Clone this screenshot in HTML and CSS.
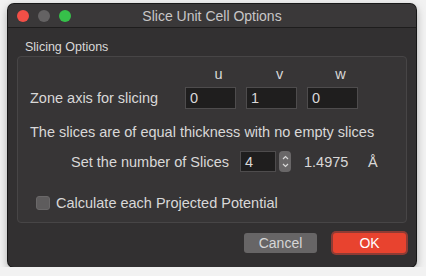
FILE: index.html
```html
<!doctype html>
<html>
    <head>
        <link rel="stylesheet" href="styles.css">
    </head>
    <body>
        <div class="window">
            <div class="titlebar">
                <div class="lights">
                    <span class="light red"></span>
                    <span class="light grey"></span>
                    <span class="light green"></span>
                </div>
                <div class="title">Slice Unit Cell Options</div>
            </div>
            <div class="content">
                <div class="group-title">Slicing Options</div>
                <div class="group">
                    <div class="axis-head">
                        <span class="axis-label">u</span>
                        <span class="axis-label">v</span>
                        <span class="axis-label">w</span>
                    </div>
                    <div class="axis-row">
                        <span class="row-label">Zone axis for slicing</span>
                        <div class="field">0</div>
                        <div class="field">1</div>
                        <div class="field">0</div>
                    </div>
                    <p class="note">The slices are of equal thickness with no empty slices</p>
                    <div class="slices-row">
                        <span class="slices-label">Set the number of Slices</span>
                        <div class="field small">4</div>
                        <div class="stepper">
                            <svg width="7" height="17" viewBox="0 0 7 17">
                                <path d="M1 6 L3.5 3.5 L6 6" fill="none" stroke="#d8d8d8" stroke-width="1.2"/>
                                <path d="M1 11 L3.5 13.5 L6 11" fill="none" stroke="#d8d8d8" stroke-width="1.2"/>
                            </svg>
                        </div>
                        <span class="thickness">1.4975</span>
                        <span class="unit">Å</span>
                    </div>
                    <label class="check-row">
                        <span class="checkbox"></span>
                        <span>Calculate each Projected Potential</span>
                    </label>
                </div>
                <div class="buttons">
                    <button class="btn cancel">Cancel</button>
                    <button class="btn ok">OK</button>
                </div>
            </div>
        </div>
    </body>
</html>
```

FILE: styles.css
```css
* {
    margin: 0;
    padding: 0;
    box-sizing: border-box;
}
body {
    background: rgb(242, 242, 242);
    font-family: "Liberation Sans", Arial, sans-serif;
    color: #d9d8d8;
    padding: 4px 10px 0 8px;
}
.window {
    width: 408px;
    height: 263px;
    background: #323031;
    border-radius: 6px;
    box-shadow: 0 3px 10px rgba(0, 0, 0, 0.35), 0 0 0 1px #1c1c1c;
    overflow: hidden;
}
.titlebar {
    height: 24px;
    background: #3a3839;
    border-bottom: 1px solid #1e1d1d;
    display: flex;
    align-items: center;
    position: relative;
}
.lights {
    display: flex;
    gap: 9px;
    padding-left: 9px;
}
.light {
    width: 12px;
    height: 12px;
    border-radius: 50%;
}
.red {
    background: #f24f47;
}
.grey {
    background: #646263;
}
.green {
    background: #36c04a;
}
.title {
    position: absolute;
    left: 0;
    right: 0;
    text-align: center;
    font-size: 14px;
    color: #c8c6c7;
}
.content {
    padding: 12px 9px 0 9px;
}
.group-title {
    font-size: 12.5px;
    line-height: 15px;
    padding-left: 8px;
    height: 16px;
}
.group {
    height: 167px;
    background: #373536;
    border: 1px solid #474546;
    border-radius: 4px;
    font-size: 14.5px;
    padding-left: 12px;
}
.axis-head {
    display: flex;
    gap: 10px;
    padding-left: 166px;
    padding-top: 9px;
    height: 30px;
}
.axis-label {
    width: 51px;
    text-align: center;
    padding-right: 6px;
}
.axis-row {
    display: flex;
    align-items: center;
    gap: 10px;
}
.row-label {
    width: 145px;
}
.field {
    width: 51px;
    height: 22px;
    background: #1f1e1e;
    border: 1px solid #4e4c4d;
    padding-left: 4px;
    line-height: 20px;
    font-size: 14.5px;
}
.note {
    margin-top: 15px;
    line-height: 17px;
}
.slices-row {
    display: flex;
    align-items: center;
    margin-top: 10px;
    padding-left: 41px;
}
.slices-label {
    width: 169px;
}
.field.small {
    width: 36px;
    height: 21px;
}
.stepper {
    width: 12px;
    height: 21px;
    margin-left: 3px;
    background: #696768;
    border-radius: 4px;
    display: flex;
    align-items: center;
    justify-content: center;
}
.thickness {
    margin-left: 13px;
    width: 64px;
}
.check-row {
    display: flex;
    align-items: center;
    gap: 6px;
    margin-top: 23px;
    padding-left: 6px;
}
.checkbox {
    width: 14px;
    height: 14px;
    border-radius: 3px;
    background: #5e5c5d;
    border: 1px solid #6a6869;
}
.buttons {
    display: flex;
    justify-content: flex-end;
    gap: 16px;
    margin-top: 10px;
    padding-right: 1px;
}
.btn {
    width: 73px;
    height: 20px;
    border: none;
    border-radius: 3px;
    font-family: "Liberation Sans", Arial, sans-serif;
    font-size: 14px;
}
.cancel {
    background: #676566;
    color: #d6d6d6;
}
.ok {
    background: #e8432f;
    color: #ffffff;
    box-shadow: 0 0 0 2px rgba(220, 70, 55, 0.55);
}
```
